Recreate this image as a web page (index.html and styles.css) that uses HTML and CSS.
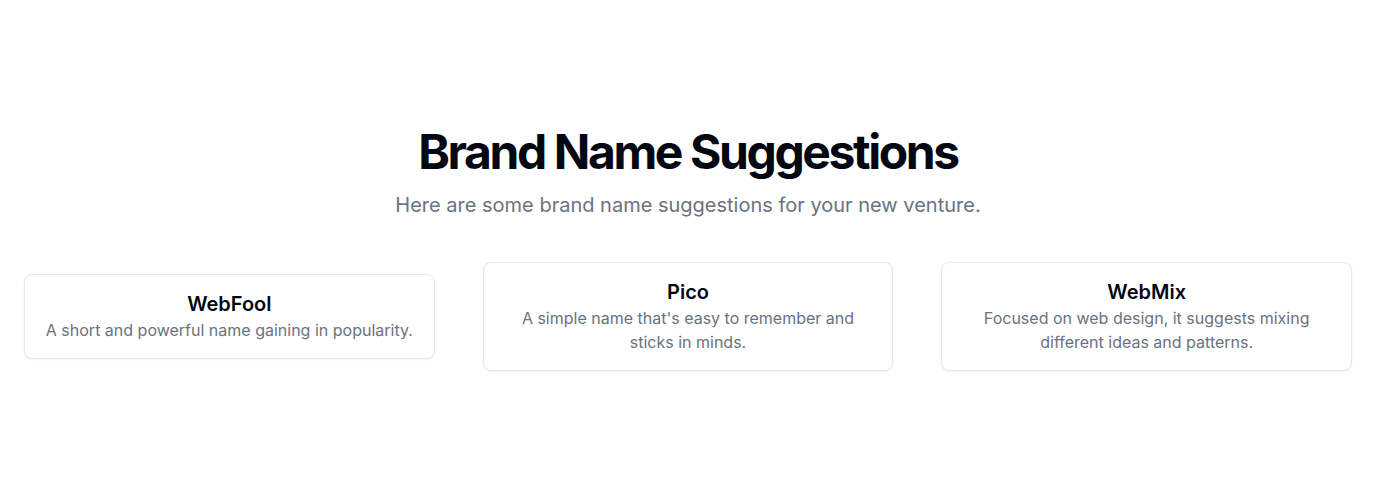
FILE: index.html
```html
<!DOCTYPE html>
<html lang="en">
<head>
<meta charset="utf-8">
<title>Brand Name Suggestions</title>
<link rel="stylesheet" href="styles.css">
</head>
<body>
<main class="page">
  <section class="hero">
    <h1 class="title">Brand Name Suggestions</h1>
    <p class="subtitle">Here are some brand name suggestions for your new venture.</p>
  </section>
  <section class="grid">
    <div class="card">
      <h3 class="card-title">WebFool</h3>
      <p class="card-text">A short and powerful name gaining in popularity.</p>
    </div>
    <div class="card">
      <h3 class="card-title">Pico</h3>
      <p class="card-text">A simple name that's easy to remember and sticks in minds.</p>
    </div>
    <div class="card">
      <h3 class="card-title">WebMix</h3>
      <p class="card-text">Focused on web design, it suggests mixing different ideas and patterns.</p>
    </div>
  </section>
</main>
</body>
</html>
```
FILE: styles.css
```css
* { box-sizing: border-box; }
html, body { margin: 0; padding: 0; background: #ffffff; }
body {
  font-family: Inter, "Noto Sans", "Liberation Sans", sans-serif;
  color: #030712;
}
.page {
  min-height: 100vh;
  display: flex;
  flex-direction: column;
  justify-content: center;
  padding: 0 24px;
}
.hero {
  text-align: center;
}
.title {
  margin: 0;
  font-size: 48px;
  line-height: 48px;
  font-weight: 700;
  letter-spacing: -0.05em;
  color: #030712;
}
.subtitle {
  margin: 15px 0 0;
  font-size: 20px;
  line-height: 28px;
  color: #6b7280;
}
.grid {
  margin-top: 43px;
  display: grid;
  grid-template-columns: repeat(3, 1fr);
  gap: 48px;
  align-items: center;
}
.card {
  border: 1px solid #e5e7eb;
  border-radius: 8px;
  padding: 15px 16px 16px;
  text-align: center;
  background: #fff;
  box-shadow: 0 1px 2px rgba(0,0,0,0.05);
}
.card-title {
  margin: 0;
  font-size: 20px;
  line-height: 28px;
  font-weight: 600;
  color: #030712;
}
.card-text {
  margin: 0;
  font-size: 16px;
  line-height: 24px;
  color: #6b7280;
}
```
